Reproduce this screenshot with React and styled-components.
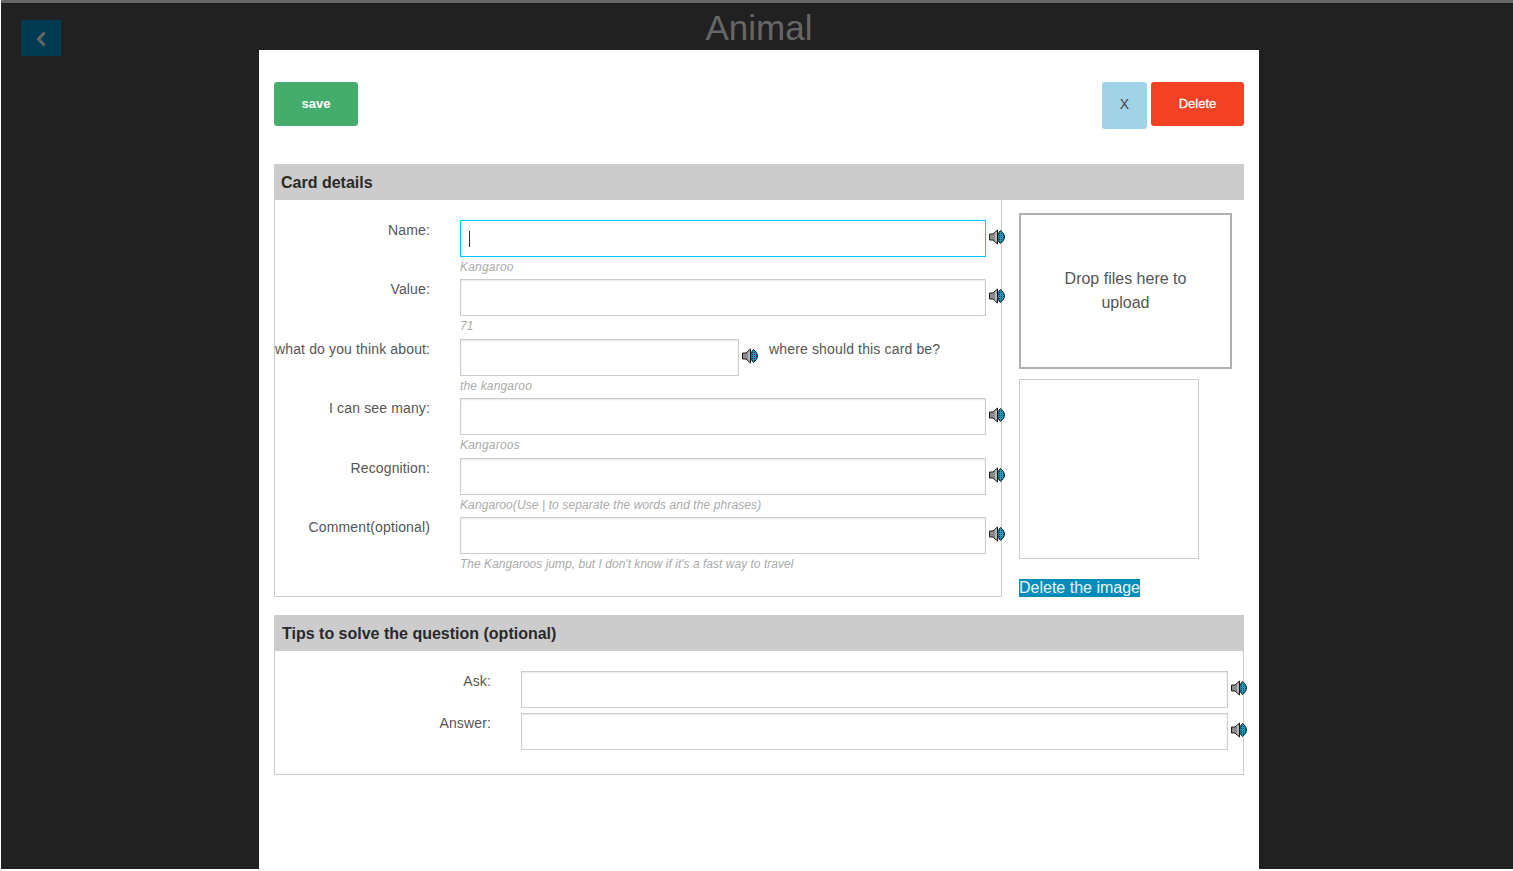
import React from "react";
import styled, { createGlobalStyle } from "styled-components";

const Global = createGlobalStyle`
  html, body { margin: 0; padding: 0; height: 100%; overflow: hidden; }
  body { font-family: "Liberation Sans", Arial, sans-serif; background: #fff; }
`;

const Page = styled.div`
  box-sizing: border-box;
  height: 869px;
  margin-left: 1px;
  background: #212121;
  border-top: 3px solid #666;
  display: grid;
  grid-template-columns: 258px 1000px 1fr;
  grid-template-rows: 47px 1fr;
  overflow: hidden;
`;

const BackButton = styled.button`
  grid-column: 1;
  grid-row: 1 / 3;
  align-self: start;
  justify-self: start;
  width: 40px;
  height: 36px;
  margin: 17px 0 0 20px;
  padding: 2px 0 0;
  border: 0;
  background: #003b52;
  display: flex;
  align-items: center;
  justify-content: center;
`;

const Title = styled.h1`
  grid-column: 2;
  grid-row: 1;
  margin: 0;
  text-align: center;
  font-size: 35px;
  font-weight: 400;
  line-height: 50px;
  color: #666;
`;

const Modal = styled.main`
  grid-column: 2;
  grid-row: 2;
  background: #fff;
  padding: 32px 15px 0;
  min-height: 0;
`;

const TopBar = styled.div`
  display: flex;
  justify-content: space-between;
  align-items: flex-start;
  height: 82px;
`;

const ButtonGroup = styled.div`
  display: flex;
  align-items: flex-start;
  gap: 4px;
`;

const ActionButton = styled.button`
  width: ${(p) => p.$width}px;
  height: ${(p) => p.$height || 44}px;
  padding: 0 0 ${(p) => (p.$height ? 4 : 1)}px;
  border: 0;
  border-radius: 3px;
  background: ${(p) => p.$bg};
  color: ${(p) => p.$color || "#fff"};
  font-family: "Liberation Sans", Arial, sans-serif;
  font-size: ${(p) => p.$size || 13}px;
  font-weight: ${(p) => p.$weight || 400};
  -webkit-text-stroke: ${(p) => p.$stroke || 0}px currentColor;
`;

const SectionHeader = styled.h2`
  box-sizing: border-box;
  margin: 0;
  height: 36px;
  padding: 1px 0 0 ${(p) => p.$indent}px;
  line-height: 36px;
  background: #ccc;
  color: #2a2a2a;
  font-size: 16px;
  font-weight: 700;
`;

const DetailsLayout = styled.div`
  display: flex;
  align-items: flex-start;
`;

const FormBox = styled.div`
  box-sizing: border-box;
  width: 728px;
  height: 397px;
  border: 1px solid #ccc;
  border-top: 0;
  padding-top: 20px;
`;

const Row = styled.div`
  display: flex;
  align-items: flex-start;
  height: 59.4px;
`;

const Label = styled.label`
  flex: none;
  width: 155px;
  margin-right: 30px;
  text-align: right;
  font-size: 14px;
  line-height: 18px;
  letter-spacing: 0.14px;
  color: #555;
  white-space: nowrap;
  padding-top: 1px;
`;

const Field = styled.div`
  flex: none;
  width: ${(p) => p.$width}px;
`;

const TextInput = styled.input`
  display: block;
  box-sizing: border-box;
  width: 100%;
  height: 37px;
  padding: 0 8px;
  background: #fff;
  border: 1px solid ${(p) => (p.$active ? "#00c6ff" : "#ccc")};
  box-shadow: ${(p) => (p.$active ? "0 0 5px #d8f4fd" : "inset 0 1px 2px rgba(0,0,0,0.1)")};
  outline: 0;
`;

const CaretWrap = styled.div`
  position: relative;
`;

const Caret = styled.span`
  position: absolute;
  left: 9px;
  top: 11px;
  width: 1px;
  height: 16px;
  background: #333;
`;

const Hint = styled.div`
  margin-top: 3px;
  font-size: 12px;
  line-height: 14px;
  font-style: italic;
  letter-spacing: ${(p) => p.$track}px;
  color: #aaa;
  white-space: nowrap;
`;

const SpeakerWrap = styled.span`
  flex: none;
  display: inline-flex;
  margin: 9px 0 0 3px;
  width: 16px;
  height: 16px;
`;

const SideQuestion = styled.span`
  margin-left: 11px;
  font-size: 14px;
  line-height: 18px;
  letter-spacing: 0.15px;
  padding-top: 1px;
  color: #555;
  white-space: nowrap;
`;

const ImageColumn = styled.div`
  margin: 13px 0 0 17px;
  display: flex;
  flex-direction: column;
  align-items: flex-start;
`;

const DropZone = styled.div`
  box-sizing: border-box;
  width: 213px;
  height: 156px;
  border: 2px solid #b0b0b0;
  display: flex;
  align-items: center;
  justify-content: center;
  text-align: center;
  padding: 0 30px;
  font-size: 16px;
  line-height: 24px;
  color: #555;
`;

const Preview = styled.div`
  box-sizing: border-box;
  width: 180px;
  height: 180px;
  margin-top: 10px;
  border: 1px solid #ccc;
`;

const DeleteImage = styled.a`
  margin-top: 20px;
  background: #008cba;
  color: #e8f6fb;
  font-size: 16px;
  line-height: 18px;
`;

const TipsHeaderWrap = styled.div`
  margin-top: 18px;
`;

const TipsBox = styled.div`
  box-sizing: border-box;
  height: 124px;
  border: 1px solid #ccc;
  border-top: 0;
  padding-top: 20px;
`;

const TipRow = styled.div`
  display: flex;
  align-items: flex-start;
  height: 42px;
`;

const TipLabel = styled(Label)`
  width: 216px;
`;

const Speaker = () => (
  <SpeakerWrap>
    <svg width="16" height="16" viewBox="0 0 16 16">
      <defs>
        <pattern id="speakerMesh" width="2" height="2" patternUnits="userSpaceOnUse">
          <rect width="2" height="2" fill="#1b9ac2" />
          <rect width="1" height="1" fill="#0b3a4c" />
        </pattern>
      </defs>
      <path d="M0.5 5h3.5l4.500-4v14l-4.500-4H0.5z" fill="#8c8c8c" stroke="#1a1a1a" />
      <path d="M6.500 3.500l1-0.800v10.600l-1-0.800z" fill="#e2e2e2" />
      <path d="M11.500 1.500c2.400 1.800 4 4 4 6.500s-1.600 4.700-4 6.500c-2.200-2-2.800-4.300-2.800-6.500s0.600-4.500 2.800-6.500z" fill="url(#speakerMesh)" stroke="#111" strokeWidth="0.9" />
    </svg>
  </SpeakerWrap>
);

const rows = [
  { label: "Name:", hint: "Kangaroo", track: 0.2, active: true },
  { label: "Value:", hint: "71", track: 0.2 },
  { label: "what do you think about:", hint: "the kangaroo", track: 0.16, short: true },
  { label: "I can see many:", hint: "Kangaroos", track: 0.2 },
  { label: "Recognition:", hint: "Kangaroo(Use | to separate the words and the phrases)", track: 0.1 },
  { label: "Comment(optional)", hint: "The Kangaroos jump, but I don't know if it's a fast way to travel", track: 0.02 },
];

export default function App() {
  return (
    <>
      <Global />
      <Page>
        <BackButton aria-label="back">
          <svg width="14" height="18" viewBox="0 0 14 18">
            <path d="M10.500 2.500L4.500 9l6 6.500" fill="none" stroke="#666" strokeWidth="3" />
          </svg>
        </BackButton>
        <Title>Animal</Title>
        <Modal>
          <TopBar>
            <ActionButton $width={84} $bg="#44ad6c" $weight={700}>save</ActionButton>
            <ButtonGroup>
              <ActionButton $width={45} $height={47} $bg="#a0d3e8" $color="#444" $size={14}>X</ActionButton>
              <ActionButton $width={93} $bg="#f34124" $stroke={0.3}>Delete</ActionButton>
            </ButtonGroup>
          </TopBar>
          <SectionHeader $indent={7}>Card details</SectionHeader>
          <DetailsLayout>
            <FormBox>
              {rows.map((r) => (
                <Row key={r.label}>
                  <Label>{r.label}</Label>
                  <Field $width={r.short ? 279 : 526}>
                    <CaretWrap>
                      <TextInput $active={r.active} />
                      {r.active && <Caret />}
                    </CaretWrap>
                    <Hint $track={r.track}>{r.hint}</Hint>
                  </Field>
                  <Speaker />
                  {r.short && <SideQuestion>where should this card be?</SideQuestion>}
                </Row>
              ))}
            </FormBox>
            <ImageColumn>
              <DropZone>Drop files here to upload</DropZone>
              <Preview />
              <DeleteImage>Delete the image</DeleteImage>
            </ImageColumn>
          </DetailsLayout>
          <TipsHeaderWrap>
            <SectionHeader $indent={8}>Tips to solve the question (optional)</SectionHeader>
          </TipsHeaderWrap>
          <TipsBox>
            <TipRow>
              <TipLabel>Ask:</TipLabel>
              <Field $width={707}><TextInput /></Field>
              <Speaker />
            </TipRow>
            <TipRow>
              <TipLabel>Answer:</TipLabel>
              <Field $width={707}><TextInput /></Field>
              <Speaker />
            </TipRow>
          </TipsBox>
        </Modal>
      </Page>
    </>
  );
}
